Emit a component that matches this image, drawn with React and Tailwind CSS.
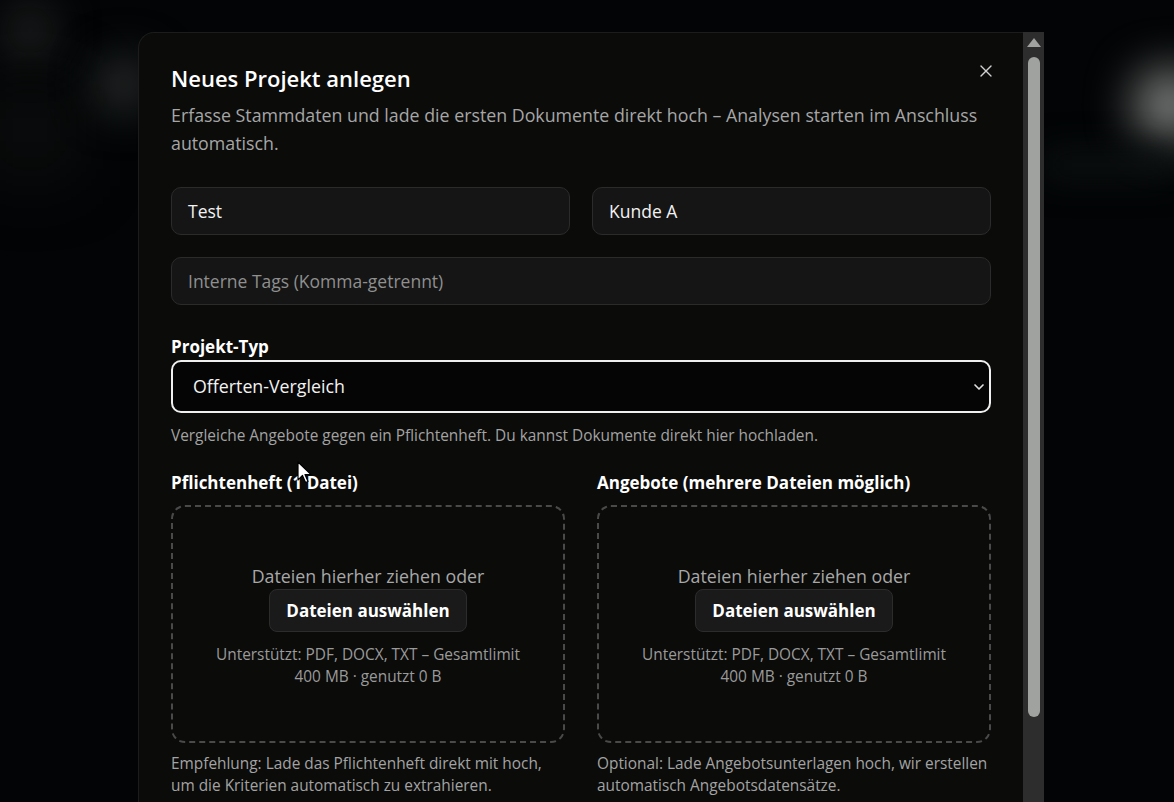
import { X, ChevronDown } from 'lucide-react'

const font = { fontFamily: '"Open Sans", "Noto Sans", sans-serif' }

function Field({ value, placeholder, className = '' }) {
  return (
    <div className={`h-12 rounded-[10px] border border-[#2b2b2b] bg-[#151515] px-4 flex items-center text-[17.5px] ${className}`}>
      {value ? <span className="text-[#f2f2f2]">{value}</span> : <span className="text-[#8f8f8f]">{placeholder}</span>}
    </div>
  )
}

function DropZone({ title, hint, hintClass = '' }) {
  return (
    <div className="flex flex-col">
      <p className="text-[17px] font-bold text-white leading-6">{title}</p>
      <div className="mt-[10px] h-[238px] rounded-[14px] border-2 border-dashed border-[#4a4a4a] flex flex-col items-center justify-center text-center px-10">
        <p className="mt-[4px] text-[17.8px] text-[#a8a8a8] leading-6">Dateien hierher ziehen oder</p>
        <button className="mt-[1px] h-[43px] px-4 rounded-lg bg-[#1a1a1a] border border-[#2c2c2c] text-[17px] font-bold text-white">
          Dateien auswählen
        </button>
        <p className="mt-[12px] text-[15.4px] leading-[22px] text-[#9a9a9a] max-w-[340px]">
          Unterstützt: PDF, DOCX, TXT – Gesamtlimit 400 MB · genutzt 0 B
        </p>
      </div>
      <p className={`mt-[10px] text-[15.4px] leading-[22px] text-[#a3a3a3] ${hintClass}`}>{hint}</p>
    </div>
  )
}

export default function App() {
  return (
    <div className="relative h-[802px] w-full overflow-hidden bg-[#020405]" style={font}>
      {/* blurred page behind the overlay */}
      <div className="absolute left-[10px] top-[10px] w-10 h-10 rounded-full bg-[#3a3a3a] blur-xl" />
      <div className="absolute left-[100px] top-[60px] w-12 h-12 rounded-full bg-[#3a3d3d] blur-xl" />
      <div className="absolute left-[1135px] top-[70px] w-[70px] h-[70px] rounded-full bg-[#8a8c8a] blur-xl" />
      <div className="absolute left-0 top-[100px] w-[60px] h-[60px] bg-[#1a1a1a] blur-2xl" />
      <div className="absolute left-[1044px] top-[150px] w-[130px] h-[30px] bg-[#0c1010] blur-lg" />

      <div className="relative ml-[138px] mt-8 flex w-[906px]">
        <div className="w-[885px] h-[800px] rounded-tl-2xl bg-[#0b0b0a] border-t border-l border-[#1c1c1c] px-[32px] pt-[27px]">
          <div className="flex items-start justify-between">
            <h2 className="text-[22px] font-semibold text-white leading-9">Neues Projekt anlegen</h2>
            <X className="mt-[1px] mr-[-5px] w-5 h-5 text-[#d0d0d0]" strokeWidth={1.6} />
          </div>
          <p className="mt-[5px] text-[17.8px] leading-7 text-[#a6a6a6] pr-2">
            Erfasse Stammdaten und lade die ersten Dokumente direkt hoch – Analysen starten im Anschluss automatisch.
          </p>

          <div className="mt-[30px] grid grid-cols-2 gap-[22px]">
            <Field value="Test" />
            <Field value="Kunde A" />
          </div>
          <Field className="mt-[22px]" placeholder="Interne Tags (Komma-getrennt)" />

          <p className="mt-[30px] text-[17px] font-bold text-white leading-6">Projekt-Typ</p>
          <div className="mt-[1px] h-[53px] rounded-[10px] border-2 border-[#f0f0f0] bg-[#050505] pl-5 pr-0.5 flex items-center justify-between">
            <span className="text-[17.8px] text-[#f2f2f2]">Offerten-Vergleich</span>
            <ChevronDown className="w-4 h-4 text-[#e0e0e0]" strokeWidth={2.5} />
          </div>
          <p className="mt-[12px] text-[15.4px] leading-[22px] text-[#a3a3a3]">
            Vergleiche Angebote gegen ein Pflichtenheft. Du kannst Dokumente direkt hier hochladen.
          </p>

          <div className="mt-[24px] grid grid-cols-2 gap-8">
            <DropZone
              title="Pflichtenheft (1 Datei)"
              hint="Empfehlung: Lade das Pflichtenheft direkt mit hoch, um die Kriterien automatisch zu extrahieren."
              hintClass="pr-4"
            />
            <DropZone
              title="Angebote (mehrere Dateien möglich)"
              hint="Optional: Lade Angebotsunterlagen hoch, wir erstellen automatisch Angebotsdatensätze."
              hintClass="-mr-2"
            />
          </div>
        </div>

        {/* scrollbar */}
        <div className="w-[21px] h-[800px] bg-[#2c2d2c] flex flex-col items-center pt-[6px]">
          <div className="w-0 h-0 border-l-[7px] border-r-[7px] border-b-[9px] border-l-transparent border-r-transparent border-b-[#a0a29f]" />
          <div className="mt-[10px] w-[12px] h-[660px] rounded-full bg-[#a0a29f]" />
        </div>
      </div>

      {/* mouse cursor */}
      <svg className="absolute left-[297px] top-[461px]" width="16" height="24" viewBox="0 0 16 24">
        <path d="M1 1 L1 19 L5.5 14.5 L8.5 21.5 L11 20.5 L8 13.5 L14 13.5 Z" fill="#fff" stroke="#000" strokeWidth="1.2" strokeLinejoin="round" />
      </svg>
    </div>
  )
}
